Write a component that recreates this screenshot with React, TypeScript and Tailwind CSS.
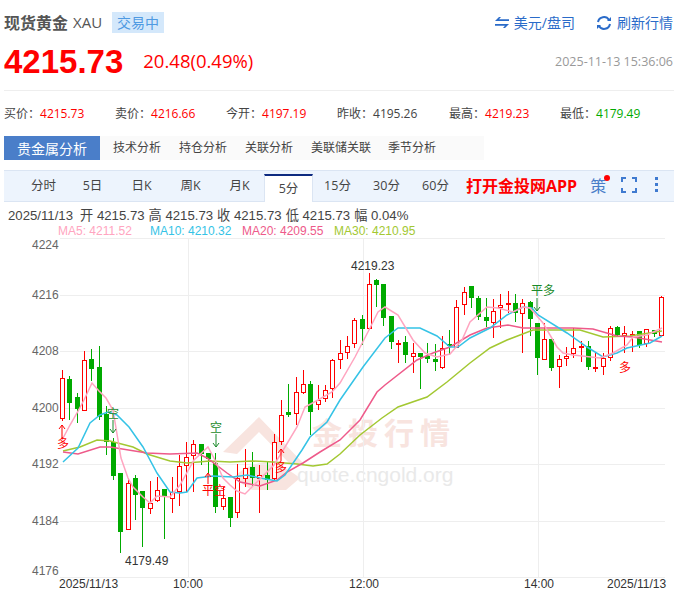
import { Fragment } from 'react';

const FONT = '"Open Sans","Noto Sans CJK SC",sans-serif';
const ARIAL = '"Liberation Sans","Noto Sans CJK SC",sans-serif';

// candles in screen pixels: [top, bottom, high, low, up?]
const CANDLES: [number, number, number, number, number][] = [
  [378, 418, 370, 421, 1], [379, 403, 376, 420, 0], [397, 409, 393, 423, 0], [360, 410, 351, 411, 1],
  [359, 369, 349, 381, 0], [367, 417, 346, 420, 0], [414, 442, 406, 455, 0], [442, 476, 438, 480, 0],
  [473, 532, 473, 553, 0], [483, 529, 478, 529, 1], [478, 495, 475, 520, 0], [491, 508, 491, 547, 0],
  [503, 508, 481, 514, 1], [490, 500, 477, 502, 1], [489, 497, 489, 539, 0], [492, 498, 477, 513, 1],
  [466, 491, 455, 506, 1], [457, 465, 442, 492, 1], [444, 455, 440, 492, 1], [444, 454, 444, 465, 0],
  [453, 459, 453, 473, 0], [463, 507, 453, 513, 0], [498, 506, 487, 510, 1], [497, 518, 497, 527, 0],
  [478, 512, 464, 518, 1], [468, 478, 449, 487, 1], [467, 478, 452, 487, 0], [475, 478, 465, 513, 1],
  [475, 480, 462, 490, 0], [442, 478, 434, 480, 1], [415, 441, 400, 445, 1], [412, 415, 384, 417, 0],
  [392, 413, 377, 425, 1], [384, 392, 370, 394, 1], [384, 412, 381, 435, 0], [400, 404, 385, 410, 1],
  [390, 398, 385, 402, 1], [360, 388, 359, 398, 1], [353, 359, 340, 369, 1], [346, 352, 336, 359, 1],
  [320, 343, 318, 348, 1], [319, 329, 315, 345, 0], [284, 328, 273, 330, 1], [280, 285, 279, 307, 0],
  [284, 318, 284, 326, 0], [316, 342, 316, 349, 0], [343, 344, 340, 363, 1], [342, 355, 336, 363, 0],
  [353, 356, 343, 373, 1], [353, 357, 353, 389, 0], [356, 359, 343, 363, 0], [359, 362, 344, 371, 0],
  [348, 367, 336, 369, 1], [344, 346, 330, 355, 0], [307, 347, 300, 348, 1], [292, 304, 287, 315, 1],
  [286, 298, 286, 308, 0], [298, 317, 296, 320, 0], [317, 321, 298, 327, 0], [311, 322, 299, 338, 1],
  [305, 307, 294, 328, 1], [303, 304, 291, 313, 1], [303, 313, 294, 322, 0], [303, 313, 299, 353, 1],
  [302, 319, 301, 336, 0], [323, 358, 323, 375, 0], [339, 359, 323, 359, 1], [339, 368, 339, 371, 0],
  [359, 366, 355, 388, 1], [356, 358, 347, 366, 1], [348, 353, 328, 358, 1], [346, 347, 341, 362, 1],
  [346, 367, 341, 370, 0], [367, 368, 353, 372, 1], [358, 366, 353, 375, 1], [328, 357, 326, 361, 1],
  [327, 335, 326, 337, 0], [333, 335, 326, 353, 1], [334, 335, 331, 352, 1], [331, 345, 331, 348, 0],
  [329, 343, 329, 347, 1], [330, 334, 330, 337, 0], [297, 335, 296, 335, 1],
];

const MA5 = '62,440 70,425 77,413 84,400 92,383 99,391 106,398 113,410 121,458 128,478 133,487 143,497 150,503 157,496 170,497 180,485 194,460 208,447 216,462 223,478 230,485 237,491 245,494 259,480 274,465 285,447 297,427 305,407 318,400 332,392 340,383 355,357 370,328 378,312 385,307 398,315 413,340 425,353 437,357 450,354 462,340 470,322 487,307 498,308 513,312 523,307 530,308 543,323 557,347 563,353 573,355 600,358 613,353 627,345 633,337 647,335 662,328';
const MA10 = '63,462 78,448 90,423 100,415 108,412 117,415 129,427 143,447 157,473 170,492 180,493 187,492 197,478 213,476 233,477 247,475 260,478 277,481 285,475 302,450 310,437 327,422 340,400 363,367 385,338 398,328 420,328 437,336 450,347 458,347 470,338 490,328 507,315 523,307 532,308 538,315 567,333 587,347 603,357 617,353 627,348 650,343 662,336';
const MA20 = '63,452 78,454 100,447 110,447 147,453 170,454 197,453 207,458 227,473 240,482 260,486 277,480 287,472 303,463 320,452 340,440 360,420 377,392 385,385 417,360 433,353 450,347 470,335 487,328 508,325 523,328 543,328 573,328 593,329 617,336 633,337 662,342';
const MA30 = '63,451 80,447 97,440 110,441 133,447 147,454 170,461 187,463 210,461 230,462 253,461 273,462 297,464 313,466 327,464 340,454 360,435 382,418 398,407 427,397 447,382 470,363 490,348 507,340 533,330 580,330 603,337 630,336 662,331';

const PERIODS = ['分时', '5日', '日K', '周K', '月K', '5分', '15分', '30分', '60分'];
const STATS = [
  { label: '买价：', value: '4215.73', color: 'text-[#f00]' },
  { label: '卖价：', value: '4216.66', color: 'text-[#f00]' },
  { label: '今开：', value: '4197.19', color: 'text-[#f00]' },
  { label: '昨收：', value: '4195.26', color: 'text-[#444]' },
  { label: '最高：', value: '4219.23', color: 'text-[#f00]' },
  { label: '最低：', value: '4179.49', color: 'text-[#0a0]' },
];

function Arrow({ x, y1, y2, color }: { x: number; y1: number; y2: number; color: string }) {
  const d = y2 > y1 ? -4 : 4;
  return (
    <path d={`M${x} ${y1}V${y2}M${x - 3} ${y2 + d}L${x} ${y2}L${x + 3} ${y2 + d}`} fill="none" stroke={color} strokeWidth="1" />
  );
}

function Chart() {
  return (
    <svg width="679" height="353" viewBox="0 238 679 353" className="block">
      {/* watermark */}
      <g>
        <path d="M223 452L259 417L304 464L290 464L259 432L237 454Z" fill="#f8e4df" />
        <path d="M233 478Q262 448 300 478L286 490L252 490Z" fill="#f8e4df" />
        <text x="312" y="444" fontSize="30" fontWeight="700" fill="#f8e4df" letterSpacing="6" fontFamily={FONT}>金投行情</text>
        <text x="297" y="482" fontSize="21" fill="#e9e9e9" fontFamily={ARIAL}>quote.cngold.org</text>
      </g>
      {[238, 295, 351, 408, 464, 521, 577].map((y) => (
        <line key={y} x1="60" x2="665" y1={y + 0.5} y2={y + 0.5} stroke="#eee" />
      ))}
      {[188, 363, 538].map((x) => (
        <line key={x} x1={x + 0.5} x2={x + 0.5} y1="238" y2="577" stroke="#eee" />
      ))}
      {CANDLES.map(([top, bottom, high, low, up], i) => {
        const x = Math.round(62 + i * 7.305) + 0.5;
        const color = up ? '#f00' : '#0a0';
        return (
          <Fragment key={i}>
            <line x1={x} x2={x} y1={high} y2={low} stroke={color} />
            {up ? (
              <rect x={x - 2} y={top + 0.5} width="4" height={bottom - top} fill="#fff" stroke={color} />
            ) : (
              <rect x={x - 2.5} y={top} width="5" height={bottom - top} fill={color} />
            )}
          </Fragment>
        );
      })}
      <polyline points={MA30} fill="none" stroke="#a3c832" strokeWidth="1.5" />
      <polyline points={MA20} fill="none" stroke="#ee5a8a" strokeWidth="1.5" />
      <polyline points={MA10} fill="none" stroke="#35c3e6" strokeWidth="1.5" />
      <polyline points={MA5} fill="none" stroke="#ffa5c0" strokeWidth="1.5" />

      {/* buy / sell marks */}
      <g fontSize="12" fontFamily={FONT}>
        <Arrow x={62} y1={438} y2={425} color="#f00" />
        <text x="57" y="448" fill="#f00">多</text>
        <text x="107" y="418" fill="#1a8a2a">空</text>
        <Arrow x={113} y1={420} y2={433} color="#1a8a2a" />
        <text x="210" y="432" fill="#1a8a2a">空</text>
        <Arrow x={216} y1={434} y2={447} color="#1a8a2a" />
        <Arrow x={208} y1={484} y2={473} color="#f00" />
        <text x="202" y="495" fill="#f00">平空</text>
        <Arrow x={281} y1={461} y2={449} color="#f00" />
        <text x="275" y="472" fill="#f00">多</text>
        <text x="531" y="295" fill="#1a8a2a">平多</text>
        <Arrow x={537} y1={298} y2={311} color="#1a8a2a" />
        <text x="619" y="372" fill="#f00">多</text>
      </g>

      <g fontSize="12" fill="#333" fontFamily={ARIAL}>
        <text x="351" y="270">4219.23</text>
        <text x="125" y="565">4179.49</text>
      </g>
      <g fontSize="12" fill="#666" fontFamily={ARIAL}>
        <text x="32" y="249">4224</text>
        <text x="32" y="299">4216</text>
        <text x="32" y="355">4208</text>
        <text x="32" y="412">4200</text>
        <text x="32" y="468">4192</text>
        <text x="32" y="525">4184</text>
        <text x="32" y="575">4176</text>
      </g>
      <g fontSize="12" fill="#333" fontFamily={ARIAL}>
        <text x="59" y="588">2025/11/13</text>
        <text x="173" y="588">10:00</text>
        <text x="349" y="588">12:00</text>
        <text x="524" y="588">14:00</text>
        <text x="607" y="588">2025/11/13</text>
      </g>
    </svg>
  );
}

export default function App() {
  return (
    <div className="w-[679px] h-[591px] overflow-hidden bg-white" style={{ fontFamily: FONT }}>
      <div className="flex items-center justify-between h-[23px] mt-[11px] pl-1 pr-[6px]">
        <div className="flex items-center">
          <span className="text-[16px] font-bold text-[#555] leading-none">现货黄金</span>
          <span className="text-[15px] text-[#555] ml-[5px] leading-none">XAU</span>
          <span className="ml-[10px] h-[21px] w-[52px] bg-[#d4e8fb] text-[#4f9ae2] text-[14px] flex items-center justify-center">交易中</span>
        </div>
        <div className="flex items-center text-[14px] text-[#2a6bc9]">
          <svg width="14" height="12" viewBox="0 0 14 12" className="mr-[5px]">
            <path d="M0 4H14V2.3H4L6 0H4L0 4ZM14 7H0V8.7H10L8 11H10L14 7Z" fill="#2a6bc9" />
          </svg>
          <span>美元/盘司</span>
          <svg width="16" height="16" viewBox="0 0 16 16" className="ml-[21px] mr-[5px]" fill="none" stroke="#2a6bc9" strokeWidth="2">
            <path d="M2 7A6 6 0 0 1 13 5" />
            <path d="M14 9A6 6 0 0 1 3 11" />
            <path d="M11 6H15V2Z" fill="#2a6bc9" stroke="none" />
            <path d="M5 10H1V14Z" fill="#2a6bc9" stroke="none" />
          </svg>
          <span>刷新行情</span>
        </div>
      </div>

      <div className="flex items-center h-[40px] mt-[7px] pl-1 pr-[6px]">
        <span className="text-[33px] font-bold text-[#f00] leading-none" style={{ fontFamily: ARIAL }}>4215.73</span>
        <span className="text-[18.5px] text-[#f00] ml-[20px] leading-none">20.48(0.49%)</span>
        <span className="text-[12.5px] text-[#999] ml-auto mt-[3px]">2025-11-13 15:36:06</span>
      </div>

      <div className="h-px bg-[#eee] mt-[9px] ml-1 mr-[5px]" />

      <div className="grid grid-cols-[111px_111px_111px_112px_111px_111px] ml-1 mt-[14px] h-[18px] items-center text-[12px] text-[#444]">
        {STATS.map((s) => (
          <div key={s.label} className="whitespace-nowrap">
            {s.label}
            <span className={s.color}>{s.value}</span>
          </div>
        ))}
      </div>

      <div className="flex items-center h-[24px] mt-[13px] ml-1 w-[480px] bg-[#fafafa] text-[12px] text-[#444]">
        <div className="w-[96px] h-full bg-[#4a7ec9] text-white text-[14px] flex items-center justify-center">贵金属分析</div>
        <span className="ml-[13px]">技术分析</span>
        <span className="ml-[18px]">持仓分析</span>
        <span className="ml-[18px]">关联分析</span>
        <span className="ml-[18px]">美联储关联</span>
        <span className="ml-[17px]">季节分析</span>
      </div>

      <div className="flex items-end h-[32px] mt-[10px] ml-1 mr-[5px] pl-[15px] bg-[#edf4fd] border-y border-[#dbe5f3] text-[12.5px] text-[#444]">
        {PERIODS.map((p) => (
          <div
            key={p}
            className={
              p === '5分'
                ? 'w-[49px] h-[28px] -mb-px bg-white border-t-2 border-x border-t-[#0d2a80] border-x-[#dbe5f3] flex items-center justify-center'
                : 'w-[49px] h-[30px] flex items-center justify-center'
            }
          >
            {p}
          </div>
        ))}
        <span className="ml-[6px] h-[30px] flex items-center text-[16px] font-bold text-[#f00] whitespace-nowrap">打开金投网APP</span>
        <span className="relative ml-[13px] h-[30px] flex items-center text-[16px] text-[#4a7ec9]">
          策
          <span className="absolute right-[-4px] top-[4px] w-[6px] h-[6px] rounded-full bg-[#f00]" />
        </span>
        <svg width="16" height="16" viewBox="0 0 16 16" className="ml-[15px] mb-[8px]" fill="none" stroke="#3f7ad0" strokeWidth="2">
          <path d="M1 5V1H5M11 1H15V5M15 11V15H11M5 15H1V11" />
        </svg>
        <svg width="4" height="16" viewBox="0 0 4 16" className="ml-[18px] mb-[8px]" fill="#3f7ad0">
          <rect x="0" y="0" width="3" height="3" />
          <rect x="0" y="6" width="3" height="3" />
          <rect x="0" y="12" width="3" height="3" />
        </svg>
      </div>

      <div className="ml-2 mt-[6px] h-[16px] flex items-center text-[13.2px] text-[#444] whitespace-nowrap gap-[4px]" style={{ fontFamily: ARIAL }}>
        <span className="mr-[3px]">2025/11/13</span>
        <span>开 4215.73</span>
        <span>高 4215.73</span>
        <span>收 4215.73</span>
        <span>低 4215.73</span>
        <span>幅 0.04%</span>
      </div>
      <div className="ml-[58px] h-[14px] flex items-center text-[12px] whitespace-nowrap" style={{ fontFamily: ARIAL }}>
        <span className="w-[92px] text-[#ffa5c0]">MA5: 4211.52</span>
        <span className="w-[92px] text-[#35c3e6]">MA10: 4210.32</span>
        <span className="w-[92px] text-[#ee5a8a]">MA20: 4209.55</span>
        <span className="text-[#a3c832]">MA30: 4210.95</span>
      </div>

      <Chart />
    </div>
  );
}
